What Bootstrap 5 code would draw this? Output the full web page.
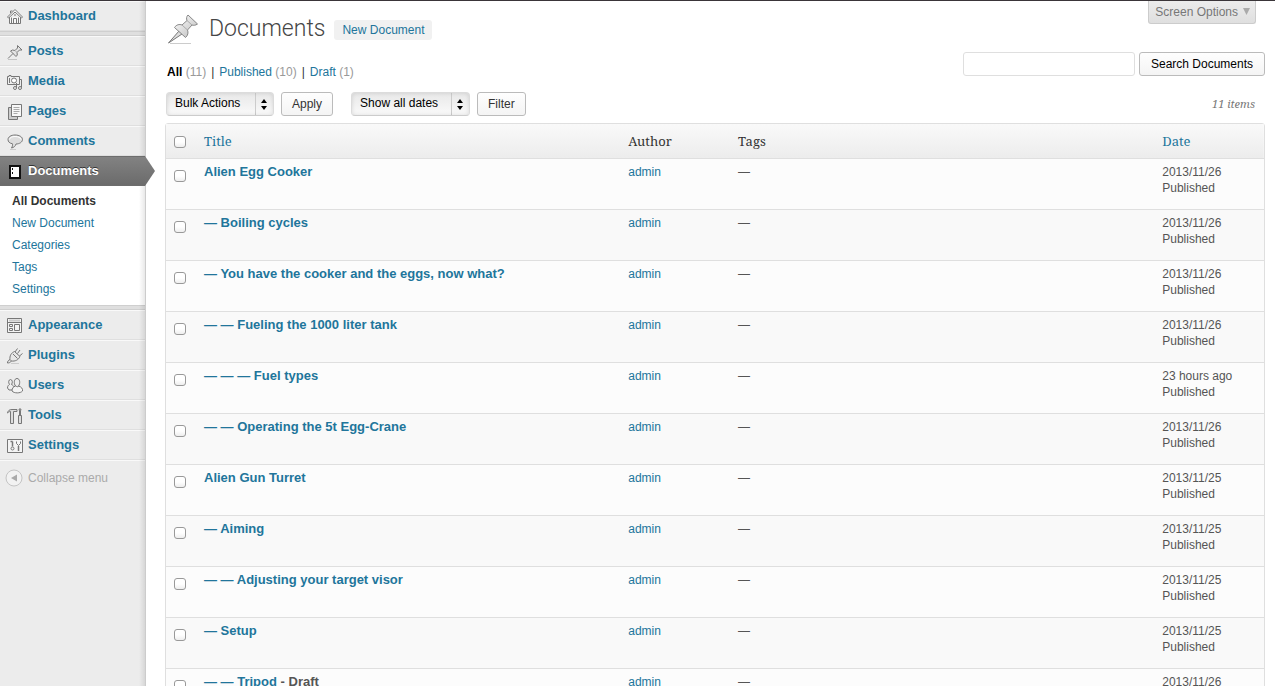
<!DOCTYPE html>
<html lang="en">
<head>
<meta charset="utf-8">
<meta name="viewport" content="width=device-width, initial-scale=1">
<title>Documents</title>
<link href="https://cdn.jsdelivr.net/npm/bootstrap@5.3.0/dist/css/bootstrap.min.css" rel="stylesheet">
<style>
  :root { --link: #21759b; --line: #dfdfdf; --sans: "Liberation Sans", Arial, sans-serif; --serif: "Noto Serif", "Liberation Serif", serif; }
  body { font: 12px/16px var(--sans); color: #333; background: #fff; border-top: 1px solid #3a3539; }
  a { color: var(--link); text-decoration: none; }
  a:hover { color: #d54e21; }
  button, input, select { font-family: var(--sans); font-size: 12px; }

  /* sidebar */
  .admin-menu { width: 146px; background: #ececec; border-right: 1px solid #ccc; }
  .admin-menu::after { content: ""; position: absolute; inset: 0 0 0 auto; width: 6px; background: linear-gradient(to right, transparent, rgba(0,0,0,.09)); pointer-events: none; }
  .menu-link { height: 30px; padding: 0 0 0 6px; gap: 4px; font-size: 13px; font-weight: bold; border-top: 1px solid #f9f9f9; border-bottom: 1px solid var(--line); }
  .menu-link svg { width: 18px; height: 18px; flex: none; margin-top: 2px; fill: none; stroke: #777; stroke-width: 1; }
  .menu-gap { height: 5px; background: #dfdfdf; border-top: 1px solid #cfcfcf; border-bottom: 1px solid #cfcfcf; }
  .menu-link.current { position: relative; z-index: 2; color: #fff; border-color: #6d6d6d; text-shadow: 0 -1px 0 #333; background: linear-gradient(#828282, #6b6b6b); }
  .menu-link.current::after { content: ""; position: absolute; left: 100%; top: -1px; width: 10px; height: 30px; background: linear-gradient(#828282, #6b6b6b); clip-path: polygon(0 0, 100% 50%, 0 100%); }
  .submenu { background: #fff; padding: 4px 0 5px; }
  .submenu a { display: block; padding: 3px 12px; }
  .submenu a.current { color: #333; font-weight: bold; }
  .collapse-btn { height: 34px; padding: 0 0 0 5px; gap: 5px; color: #aaa; border: 0; border-top: 1px solid #f9f9f9; background: none; }

  /* content */
  .work { padding: 0 10px 0 19px; }
  .title-bar { height: 51px; }
  .page-title { font: 300 23px/28px Roboto, var(--sans); color: #464646; margin: 14px 9px 0 10px; }
  .add-new { margin-top: 19px; padding: 2px 8px; background: #f1f1f1; border-radius: 3px; }
  .screen-options { height: 23px; padding: 0 4px 0 6px; margin-right: 9px; color: #777; background: linear-gradient(#ececec, #dfdfdf); border: 1px solid #ccc; border-top: 0; border-radius: 0 0 3px 3px; }
  .filter-row { height: 40px; }
  .views { padding: 12px 0 0 2px; }
  .views span { color: #999; }
  .views i { padding: 0 5px; font-style: normal; }
  .wp-btn { height: 24px; padding: 0 10px; color: #333; background: linear-gradient(#fefefe, #f4f4f4); border: 1px solid #bbb; border-radius: 3px; line-height: 22px; }
  .search-btn { padding: 0 11px; color: #000; }
  .search-box { width: 172px; height: 24px; border: 1px solid var(--line); border-radius: 3px; }
  .picker { height: 24px; border: 1px solid #dcdcdc; border-bottom-color: #ccc; border-radius: 4px; padding: 0 26px 2px 8px; color: #000; appearance: none;
    background: url("data:image/svg+xml,%3Csvg xmlns='http://www.w3.org/2000/svg' width='18' height='22'%3E%3Cpath d='M.5 0v22' stroke='%23ccc'/%3E%3Cpath d='M6 10h6l-3-4zM6 13h6l-3 4z'/%3E%3C/svg%3E") right 0 top 0 no-repeat, linear-gradient(#e8e8e8, #fafafa); box-shadow: inset 0 0 4px rgba(0,0,0,.12); }
  .pick-action { width: 108px; margin: 0 7px 0 1px; }
  .pick-date { width: 119px; margin: 0 7px 0 18px; }
  .item-count { margin-right: 10px; font: italic 11px/16px var(--serif); color: #777; }

  /* document list */
  .docs { table-layout: fixed; border: 1px solid var(--line); border-radius: 3px 3px 0 0; border-collapse: separate; border-spacing: 0; color: #555; margin-top: 7px; }
  .docs > thead > tr > th { height: 35px; padding: 0 8px; vertical-align: middle; font: 13px/20px var(--serif); color: #333; background: none; border-bottom: 1px solid var(--line); }
  .docs > thead { background: linear-gradient(#f9f9f9, #ececec); }
  .docs > tbody > tr > td { height: 51px; padding: 5px 8px 0; vertical-align: top; background: #fcfcfc; border-bottom: 1px solid var(--line); color: #555; }
  .docs > tbody > tr:nth-child(even) > td { background: #f9f9f9; }
  .docs .row-title { font-size: 13px; font-weight: bold; }
  .docs .pick { width: 30px; }
  .docs .w-tenth { width: 10%; }
  .docs input { display: block; appearance: none; width: 12px; height: 12px; margin: 0; border: 1px solid #999; border-radius: 3px; background: linear-gradient(#fff 50%, #eee); }
  .docs input:checked { background: var(--link); }
  .docs thead input { margin-top: 2px; }
  .docs tbody input { margin-top: 6px; }
</style>
</head>
<body>
<div class="d-flex min-vh-100">
  <nav class="admin-menu position-relative flex-shrink-0" aria-label="Main menu">
    <a href="#" class="menu-link d-flex align-items-center"><svg viewBox="0 0 18 18"><path d="M3.500 9v6.500h11V9M4.500 5V3h2" fill="#f7f7f7"/><path d="M1.500 9 9 1.500 16.500 9l-1 1L9 4l-6.500 6z" fill="#fff"/><path d="M7.500 15.500v-5h3v5M9 6v2M5.500 9.500v6M12.500 9.500v6" /></svg>Dashboard</a>
    <div class="menu-gap"></div>
    <a href="#" class="menu-link d-flex align-items-center"><svg viewBox="0 0 18 18"><path d="M2 15.500 7 10.500M4.500 8l2-1 2.500.5L11.500 5V2.500l4.500 4.500h-2.500L11 9.500l.3 2.500-1.300 1.500z" fill="#e4e4e4"/><path d="m9 7.500 2 2" stroke="#aaa"/><path d="M2 16.500h9" stroke="#c4c4c4"/></svg>Posts</a>
    <a href="#" class="menu-link d-flex align-items-center"><svg viewBox="0 0 18 18"><path d="M1.500 3.500H3v-1h2v1h8.500v8h-12z" fill="#eee"/><circle cx="8" cy="7.500" r="2.500" fill="#fff"/><path d="M3.500 5v5M10.500 15v-5M15.500 14.500v-8h-2" /><circle cx="9" cy="15" r="1.500" fill="#eee"/><circle cx="14" cy="15" r="1.500" fill="#eee"/></svg>Media</a>
    <a href="#" class="menu-link d-flex align-items-center"><svg viewBox="0 0 18 18"><path d="M5 4.500H2.500v12h9V14" fill="#ccc"/><path d="M5.500 1.500h10v12h-10z" fill="#f7f7f7"/><path d="M7.500 4.500h6M7.500 6.500h6M7.500 8.500h6M7.500 10.500h4" stroke="#aaa"/></svg>Pages</a>
    <a href="#" class="menu-link d-flex align-items-center"><svg viewBox="0 0 18 18"><path d="M9 2c4.500 0 7.500 2 7.500 4.500s-3 4.500-6.500 4.500c-.5 2-2 3.500-4.500 4 1-1.500 1.200-3 1-4.200C3.500 10.200 2 8.800 2 6.500 2 4 5 2 9 2z" fill="#ddd"/><path d="M3.500 6.500c0-4 11-4 11.500 0" stroke="#fff"/><path d="M4 16.500h6" stroke="#ccc"/></svg>Comments</a>
    <a href="#" class="menu-link current d-flex align-items-center"><svg viewBox="0 0 18 18"><path d="M4 3h10v12H4z" fill="#fff" stroke="#111" stroke-width="2"/><path d="M6.500 5v2M6.500 9v2" stroke="#111"/></svg>Documents</a>
    <div class="submenu">
      <a href="#" class="current">All Documents</a>
      <a href="#">New Document</a>
      <a href="#">Categories</a>
      <a href="#">Tags</a>
      <a href="#">Settings</a>
    </div>
    <div class="menu-gap"></div>
    <a href="#" class="menu-link d-flex align-items-center"><svg viewBox="0 0 18 18"><path d="M1.500 1.500h14v14h-14z" fill="#f4f4f4"/><path d="M3 3.500h11" stroke="#ccc" stroke-width="2"/><path d="M2 5.500h13M3.500 7.500h3v2h-3zM3.500 11.500h3v2h-3zM8.500 7.500h5v6h-5z"/></svg>Appearance</a>
    <a href="#" class="menu-link d-flex align-items-center"><svg viewBox="0 0 18 18"><path d="M1.500 16c0-1.500.5-2.500 2.500-3.500C3.500 9 5 6 8.500 4.500l5.500 5c-1.500 3.500-5 5-8.500 4.500-1 1.500-2.500 2-4 2z" fill="#e8e8e8"/><path d="m9 5 2.500-3.500M13.500 9l3-2.500M7 7l4.500 4.500M11.500 6.500 14 3M4 12.500 5.500 14"/><path d="M5 16.500h8" stroke="#ccc"/></svg>Plugins</a>
    <a href="#" class="menu-link d-flex align-items-center"><svg viewBox="0 0 18 18"><path d="M1.500 11c0-2 1-3 2-3.500-1.500-2-.8-5 1-5s2.500 3 1 5C7 8 7.500 9 8 10.500L6 13H3z" fill="#eee"/><path d="M9.500 9C7.500 6.500 8 1.500 11 1.500S14.500 6.500 12.500 9" fill="#eee"/><path d="M9.500 9c2 1 3 1 3 0 3 .8 4.500 3 4 5-2 2.500-8.500 2.500-10.500 0 0-2.500 1.200-4.200 3.500-5z" fill="#f4f4f4"/></svg>Users</a>
    <a href="#" class="menu-link d-flex align-items-center"><svg viewBox="0 0 18 18"><path d="M1.500 6C2 3.500 3.500 2.500 6 2.500h5v2H7.500v12h-3v-12C3 4.500 2.500 5 1.500 6z" fill="#ddd"/><path d="M13.500 8V4l-.5-2h2l-.5 2v4M12.500 8.500h3v8h-3z" fill="#ddd"/></svg>Tools</a>
    <a href="#" class="menu-link d-flex align-items-center"><svg viewBox="0 0 18 18"><path d="M1.500 2.500h15v13h-15z" fill="#f4f4f4"/><path d="M6.500 4.500v5M4.500 4.500h2M12.500 9v5" stroke-width="1.500"/><circle cx="6.500" cy="11.500" r="1.500"/><path d="M10.500 4.500v2l2 2 2-2v-2"/></svg>Settings</a>
    <button type="button" class="collapse-btn d-flex align-items-center w-100"><svg width="18" height="18" viewBox="0 0 18 18"><circle cx="9" cy="9" r="8" fill="#f2f2f2" stroke="#c4c4c4"/><path d="M12 5.500v7L6 9z" fill="#aaa"/></svg>Collapse menu</button>
  </nav>

  <main class="work flex-grow-1">
    <header class="title-bar d-flex align-items-start">
      <svg class="mt-2" width="34" height="38" viewBox="0 0 34 38"><defs><linearGradient id="pin" x2="1" y2="1"><stop stop-color="#fff"/><stop offset="1" stop-color="#bbb"/></linearGradient></defs><path d="M5 34.500h21" stroke="#ccc"/><path d="m3.500 34 10.500-12 3 3z" fill="#ddd" stroke="#777"/><path d="M9.500 18.500c2-3 5-3.500 7.500-2.500l5-4.500c-.8-2-.5-4 1-5.500L32.500 15c-2 1.500-4 1.500-5.500 1L22.500 21c1 2.500.5 5.500-2 7.500z" fill="url(#pin)" stroke="#888"/><path d="m17 16 5.500 5M22 11.500l5 4.500" stroke="#aaa"/></svg>
      <h1 class="page-title">Documents</h1>
      <a href="#" class="add-new">New Document</a>
      <button type="button" class="screen-options ms-auto d-flex align-items-center gap-1">Screen Options <svg width="9" height="8" viewBox="0 0 9 8"><path d="M1 0h7L4.500 7z" fill="#aaa"/></svg></button>
    </header>

    <div class="filter-row d-flex justify-content-between align-items-start">
      <div class="views d-flex">
        <a href="#" class="fw-bold text-black">All</a>&nbsp;<span>(11)</span><i>|</i>
        <a href="#">Published</a>&nbsp;<span>(10)</span><i>|</i>
        <a href="#">Draft</a>&nbsp;<span>(1)</span>
      </div>
      <form class="d-flex gap-1">
        <input type="search" class="search-box" aria-label="Search documents">
        <button type="button" class="wp-btn search-btn">Search Documents</button>
      </form>
    </div>

    <div class="d-flex align-items-center">
      <select class="picker pick-action" aria-label="Bulk actions"><option>Bulk Actions</option></select>
      <button type="button" class="wp-btn">Apply</button>
      <select class="picker pick-date" aria-label="Dates"><option>Show all dates</option></select>
      <button type="button" class="wp-btn">Filter</button>
      <span class="item-count ms-auto">11 items</span>
    </div>

    <table class="table docs mb-0">
      <thead>
        <tr><th class="pick"><input type="checkbox" aria-label="Select all"></th><th><a href="#">Title</a></th><th class="w-tenth">Author</th><th>Tags</th><th class="w-tenth"><a href="#">Date</a></th></tr>
      </thead>
      <tbody>
        <tr><td><input type="checkbox" aria-label="Select Alien Egg Cooker"></td><td><a href="#" class="row-title">Alien Egg Cooker</a></td><td><a href="#">admin</a></td><td>—</td><td>2013/11/26<br>Published</td></tr>
        <tr><td><input type="checkbox" aria-label="Select Boiling cycles"></td><td><a href="#" class="row-title">— Boiling cycles</a></td><td><a href="#">admin</a></td><td>—</td><td>2013/11/26<br>Published</td></tr>
        <tr><td><input type="checkbox" aria-label="Select You have the cooker and the eggs, now what?"></td><td><a href="#" class="row-title">— You have the cooker and the eggs, now what?</a></td><td><a href="#">admin</a></td><td>—</td><td>2013/11/26<br>Published</td></tr>
        <tr><td><input type="checkbox" aria-label="Select Fueling the 1000 liter tank"></td><td><a href="#" class="row-title">— — Fueling the 1000 liter tank</a></td><td><a href="#">admin</a></td><td>—</td><td>2013/11/26<br>Published</td></tr>
        <tr><td><input type="checkbox" aria-label="Select Fuel types"></td><td><a href="#" class="row-title">— — — Fuel types</a></td><td><a href="#">admin</a></td><td>—</td><td>23 hours ago<br>Published</td></tr>
        <tr><td><input type="checkbox" aria-label="Select Operating the 5t Egg-Crane"></td><td><a href="#" class="row-title">— — Operating the 5t Egg-Crane</a></td><td><a href="#">admin</a></td><td>—</td><td>2013/11/26<br>Published</td></tr>
        <tr><td><input type="checkbox" aria-label="Select Alien Gun Turret"></td><td><a href="#" class="row-title">Alien Gun Turret</a></td><td><a href="#">admin</a></td><td>—</td><td>2013/11/25<br>Published</td></tr>
        <tr><td><input type="checkbox" aria-label="Select Aiming"></td><td><a href="#" class="row-title">— Aiming</a></td><td><a href="#">admin</a></td><td>—</td><td>2013/11/25<br>Published</td></tr>
        <tr><td><input type="checkbox" aria-label="Select Adjusting your target visor"></td><td><a href="#" class="row-title">— — Adjusting your target visor</a></td><td><a href="#">admin</a></td><td>—</td><td>2013/11/25<br>Published</td></tr>
        <tr><td><input type="checkbox" aria-label="Select Setup"></td><td><a href="#" class="row-title">— Setup</a></td><td><a href="#">admin</a></td><td>—</td><td>2013/11/25<br>Published</td></tr>
        <tr><td><input type="checkbox" aria-label="Select Tripod"></td><td><span class="row-title"><a href="#">— — Tripod</a> - Draft</span></td><td><a href="#">admin</a></td><td>—</td><td>2013/11/26<br>Published</td></tr>
      </tbody>
    </table>
  </main>
</div>
<script src="https://cdn.jsdelivr.net/npm/bootstrap@5.3.0/dist/js/bootstrap.bundle.min.js"></script>
</body>
</html>
